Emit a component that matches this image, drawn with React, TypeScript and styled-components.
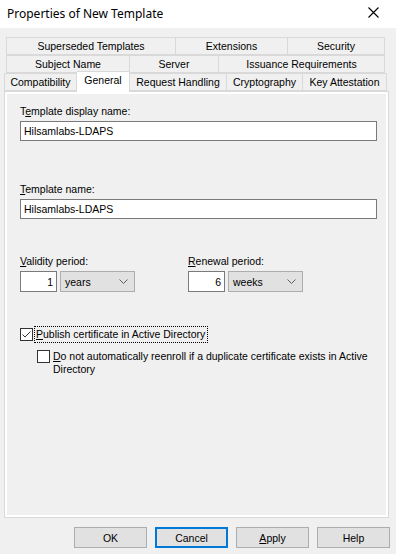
import React from 'react';
import styled, { createGlobalStyle } from 'styled-components';

const GlobalStyle = createGlobalStyle`
  html, body {
    margin: 0;
    padding: 0;
    background: #f0f0f0;
  }
  body {
    font-family: "Liberation Sans", Arial, sans-serif;
    font-size: 10.5px;
    color: #000;
  }
`;

const Window = styled.div`
  width: 396px;
  height: 554px;
  background: #f0f0f0;
  display: flex;
  flex-direction: column;
  overflow: hidden;
`;

const TitleBar = styled.div`
  height: 28px;
  background: #fff;
  display: flex;
  align-items: center;
  justify-content: space-between;
  padding: 0 0 0 7px;
`;

const TitleText = styled.span`
  font-family: "Noto Sans", "Open Sans", sans-serif;
  font-size: 12px;
  margin-top: -2px;
`;

const CloseBox = styled.div`
  width: 46px;
  height: 28px;
  display: flex;
  align-items: center;
  justify-content: center;
  margin-top: -4px;
`;

const Body = styled.div`
  padding: 9px 7px 0 4px;
  display: flex;
  flex-direction: column;
`;

const TabRow = styled.div<{ inset: number }>`
  display: flex;
  height: 18px;
  margin-left: ${({ inset }) => inset}px;
  margin-right: ${({ inset }) => inset}px;
  align-items: flex-end;
`;

const Tab = styled.div<{ w: number; selected?: boolean }>`
  width: ${({ w }) => w}px;
  flex: none;
  height: ${({ selected }) => (selected ? 21 : 18)}px;
  margin-bottom: ${({ selected }) => (selected ? -1 : 0)}px;
  box-sizing: border-box;
  border: 1px solid #d9d9d9;
  border-left-width: 0;
  border-bottom: ${({ selected }) => (selected ? 'none' : '1px solid #d9d9d9')};
  background: ${({ selected }) => (selected ? '#fff' : '#f0f0f0')};
  display: flex;
  align-items: ${({ selected }) => (selected ? 'flex-start' : 'center')};
  padding-top: ${({ selected }) => (selected ? 2 : 0)}px;
  justify-content: center;
  white-space: nowrap;
  position: relative;
  z-index: ${({ selected }) => (selected ? 2 : 1)};
  &:first-child {
    border-left-width: 1px;
  }
`;

const Panel = styled.div`
  height: 427px;
  box-sizing: border-box;
  border: 1px solid #d9d9d9;
  box-shadow: inset 0 0 0 2px #fff;
  background: #f0f0f0;
  padding: 13px 12px 0 15px;
  display: flex;
  flex-direction: column;
`;

const Label = styled.div`
  line-height: 13px;
  height: 13px;
  margin-bottom: 3px;
`;

const Key = styled.span`
  text-decoration: underline;
`;

const TextField = styled.div`
  height: 20px;
  box-sizing: border-box;
  border: 1px solid #7a7a7a;
  background: #fff;
  display: flex;
  align-items: center;
  padding-left: 3px;
  width: 357px;
`;

const Field = styled.div<{ gap: number }>`
  display: flex;
  flex-direction: column;
  margin-bottom: ${({ gap }) => gap}px;
`;

const PeriodRow = styled.div`
  display: flex;
  margin-bottom: 36px;
`;

const Period = styled.div`
  width: 168px;
  display: flex;
  flex-direction: column;
`;

const PeriodInputs = styled.div`
  display: flex;
  gap: 3px;
`;

const NumberBox = styled.div<{ w: number }>`
  width: ${({ w }) => w}px;
  height: 21px;
  box-sizing: border-box;
  border: 1px solid #7a7a7a;
  background: #fff;
  display: flex;
  align-items: center;
  justify-content: flex-end;
  padding-right: 3px;
`;

const Combo = styled.div`
  width: 75px;
  height: 21px;
  box-sizing: border-box;
  border: 1px solid #adadad;
  background: #e1e1e1;
  display: flex;
  align-items: center;
  justify-content: space-between;
  padding: 0 6px 0 4px;
`;

const CheckRow = styled.div<{ indent: number }>`
  display: flex;
  align-items: flex-start;
  margin-left: ${({ indent }) => indent}px;
  gap: 3px;
  margin-bottom: 9px;
`;

const Box = styled.div`
  width: 13px;
  height: 13px;
  flex: none;
  box-sizing: border-box;
  border: 1px solid #333;
  background: #fff;
  display: flex;
  align-items: center;
  justify-content: center;
`;

const CheckText = styled.span<{ focused?: boolean }>`
  line-height: 13px;
  outline: ${({ focused }) => (focused ? '1px dotted #000' : 'none')};
  outline-offset: 1px;
  padding-right: 1px;
`;

const ButtonRow = styled.div`
  display: flex;
  justify-content: flex-end;
  gap: 8px;
  padding: 9px 0 0;
  margin-right: -1px;
`;

const Button = styled.div<{ primary?: boolean }>`
  width: 73px;
  height: 21px;
  box-sizing: border-box;
  border: ${({ primary }) => (primary ? '2px solid #0078d7' : '1px solid #adadad')};
  background: #e1e1e1;
  display: flex;
  align-items: center;
  justify-content: center;
`;

const Chevron = () => (
  <svg width="9" height="5" viewBox="0 0 9 5">
    <path d="M0.5 0.5 L4.5 4.5 L8.5 0.5" fill="none" stroke="#606060" strokeWidth="1" />
  </svg>
);

function App() {
  return (
    <>
      <GlobalStyle />
      <Window>
        <TitleBar>
          <TitleText>Properties of New Template</TitleText>
          <CloseBox>
            <svg width="11" height="11" viewBox="0 0 11 11">
              <path d="M0.5 0.5 L10.5 10.5 M10.5 0.5 L0.5 10.5" stroke="#000" strokeWidth="1.1" />
            </svg>
          </CloseBox>
        </TitleBar>
        <Body>
          <TabRow inset={2}>
            <Tab w={170}>Superseded Templates</Tab>
            <Tab w={112}>Extensions</Tab>
            <Tab w={97}>Security</Tab>
          </TabRow>
          <TabRow inset={2}>
            <Tab w={124}>Subject Name</Tab>
            <Tab w={89}>Server</Tab>
            <Tab w={166}>Issuance Requirements</Tab>
          </TabRow>
          <TabRow inset={0}>
            <Tab w={73}>Compatibility</Tab>
            <Tab w={53} selected>General</Tab>
            <Tab w={97}>Request Handling</Tab>
            <Tab w={76}>Cryptography</Tab>
            <Tab w={84}>Key Attestation</Tab>
          </TabRow>
          <Panel>
            <Field gap={42}>
              <Label>T<Key>e</Key>mplate display name:</Label>
              <TextField>Hilsamlabs-LDAPS</TextField>
            </Field>
            <Field gap={36}>
              <Label><Key>T</Key>emplate name:</Label>
              <TextField>Hilsamlabs-LDAPS</TextField>
            </Field>
            <PeriodRow>
              <Period>
                <Label><Key>V</Key>alidity period:</Label>
                <PeriodInputs>
                  <NumberBox w={37}>1</NumberBox>
                  <Combo>years<Chevron /></Combo>
                </PeriodInputs>
              </Period>
              <Period>
                <Label><Key>R</Key>enewal period:</Label>
                <PeriodInputs>
                  <NumberBox w={37}>6</NumberBox>
                  <Combo>weeks<Chevron /></Combo>
                </PeriodInputs>
              </Period>
            </PeriodRow>
            <CheckRow indent={0}>
              <Box>
                <svg width="11" height="11" viewBox="0 0 11 11">
                  <path d="M1.5 5.5 L4 8 L9.5 2.5" fill="none" stroke="#333" strokeWidth="1" />
                </svg>
              </Box>
              <CheckText focused><Key>P</Key>ublish certificate in Active Directory</CheckText>
            </CheckRow>
            <CheckRow indent={17}>
              <Box />
              <CheckText>
                <Key>D</Key>o not automatically reenroll if a duplicate certificate exists in Active Directory
              </CheckText>
            </CheckRow>
          </Panel>
          <ButtonRow>
            <Button>OK</Button>
            <Button primary>Cancel</Button>
            <Button><Key>A</Key>pply</Button>
            <Button>Help</Button>
          </ButtonRow>
        </Body>
      </Window>
    </>
  );
}

export default App;
